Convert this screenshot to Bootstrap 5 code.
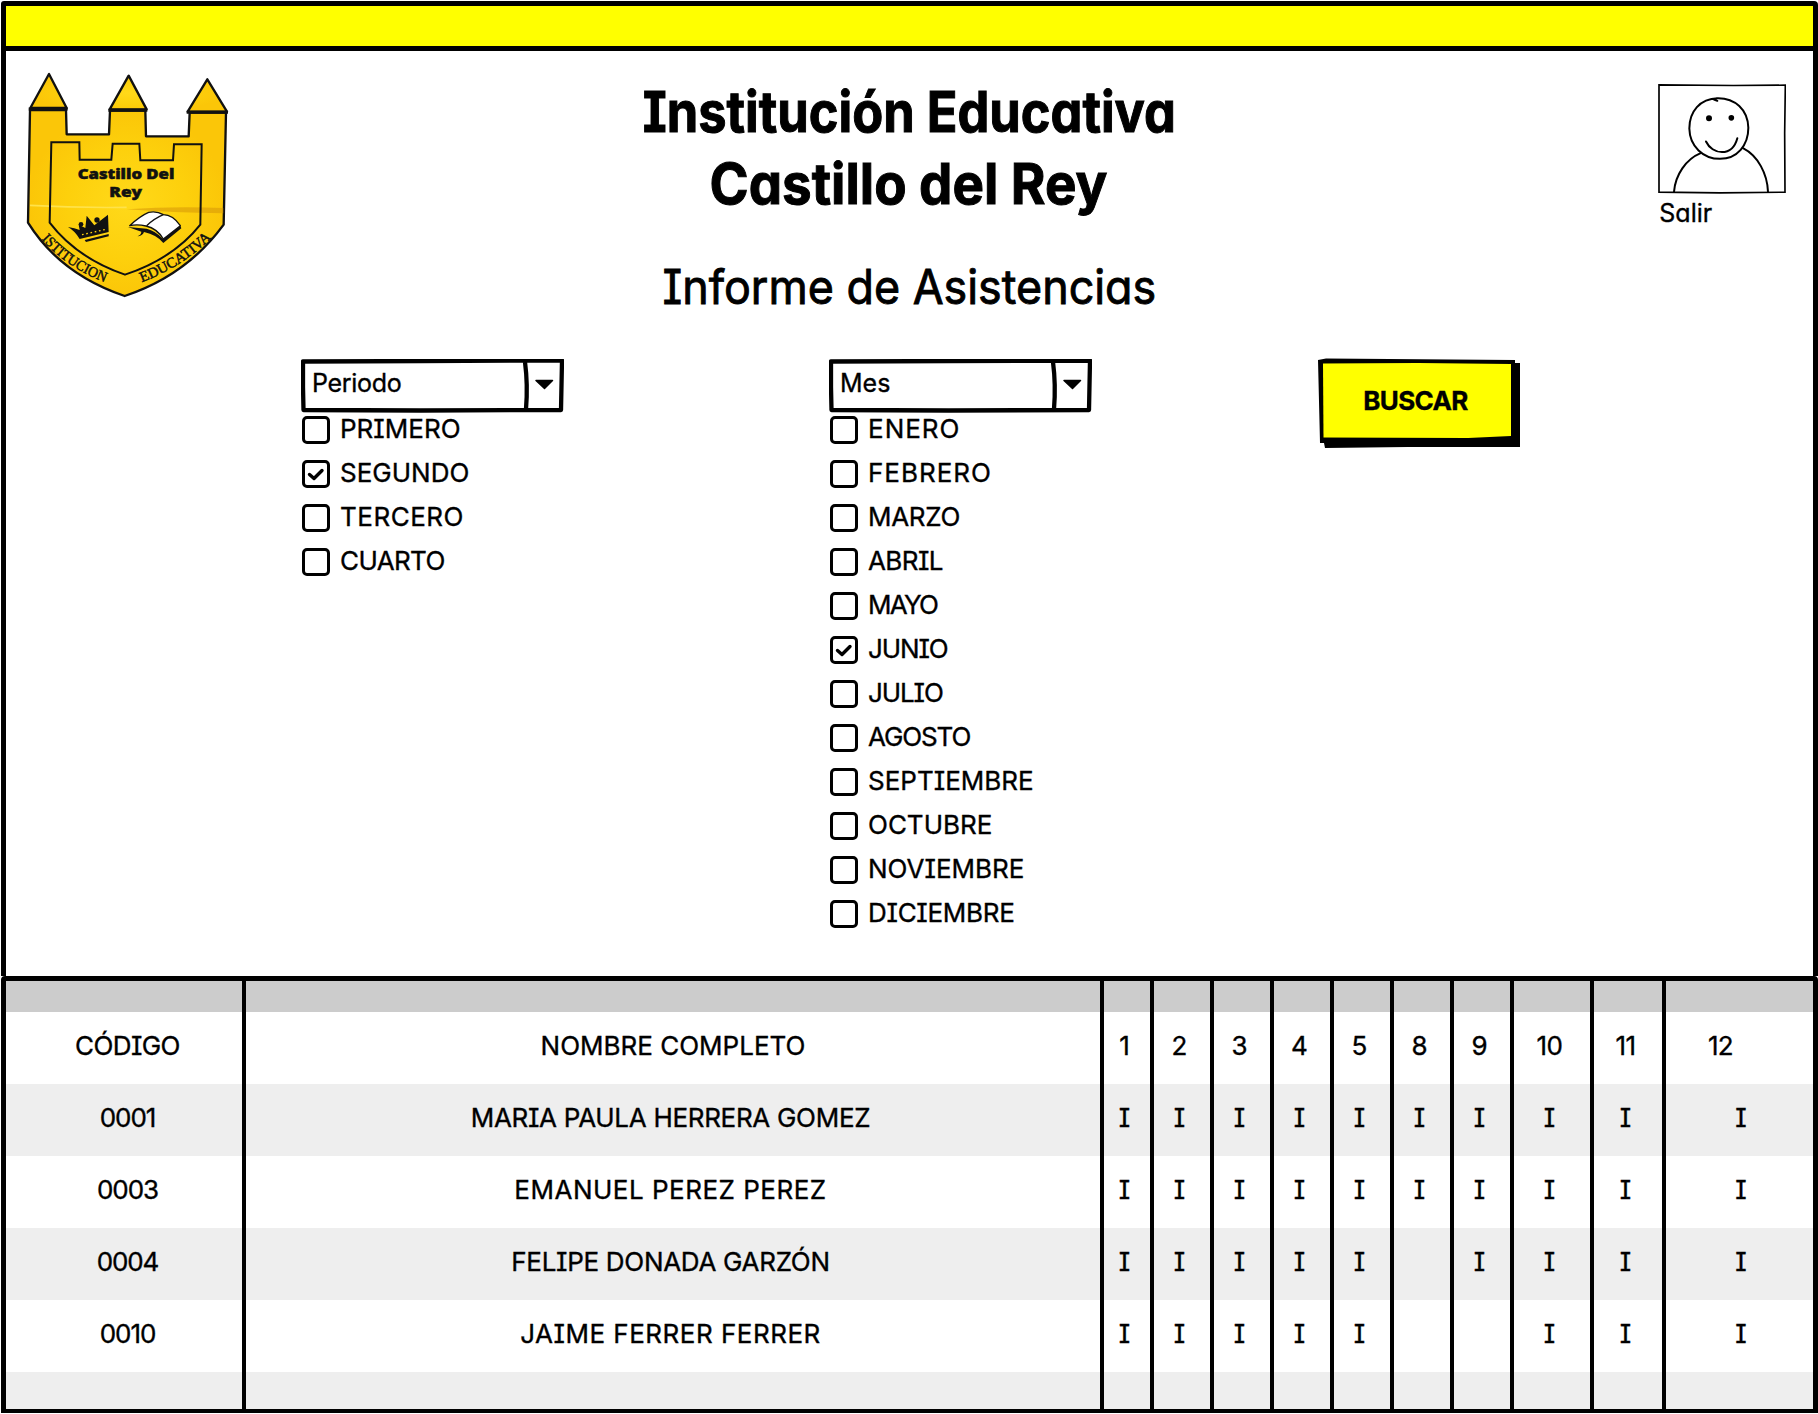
<!DOCTYPE html>
<html lang="es">
<head>
<meta charset="utf-8">
<meta name="viewport" content="width=device-width, initial-scale=1">
<title>Informe de Asistencias</title>
<link href="https://cdn.jsdelivr.net/npm/bootstrap@5.3.0/dist/css/bootstrap.min.css" rel="stylesheet">
<style>
body{font-family:Inter,"Open Sans",sans-serif;font-feature-settings:"cv08" 1,"cv11" 1;font-size:26px;line-height:28px;color:#000;background:#fff;-webkit-text-stroke:.35px #000}
.page-wrap{width:1818px;height:1414px;overflow:hidden;padding:1px 0 0 1px}
.top-strip{height:50px;background:#ff0;border:5px solid #000;border-radius:3px 4px 0 0}
.sheet{height:925px;border:solid #000;border-width:0 5px}
.site-head{height:308px}
.crest{width:213.33px;height:230px;margin:19px 0 0 14px}
.titles{width:1361px;margin-left:-5px;padding-top:25px}
.titles h1{font-size:56px;line-height:72px;font-weight:700;margin:0;-webkit-text-stroke:1px #000}
.titles h2{font-size:48px;line-height:58px;font-weight:400;margin:38px 0 0;-webkit-text-stroke:.9px #000}
.titles span{display:inline-block;white-space:nowrap}
.sq-a{transform:scaleX(.903)}
.sq-b{transform:scaleX(.945)}
.sq-c{transform:scaleX(.934)}
.profile{margin:32px 0 0 69px;width:130px}
.profile a{font-size:25px;color:#000;margin:5px 0 0 0;padding-left:1px}
.filters{padding-left:295px}
.pick{width:263px}
.pick-2{margin-left:265px}
.combo{width:263px;height:53px;font-size:25px;line-height:28px;background:none;border:0;padding:0 0 5px 11px;text-align:left;color:#000}
.combo svg,.go svg{position:absolute;inset:0;z-index:-1}
.combo,.go{position:relative;z-index:0}
.opt{height:28px;margin-bottom:16px;padding-left:1px}
.opt .form-check-input{width:28px;height:28px;margin:0 10px 0 0;border:3px solid #000;border-radius:5px;background-color:#fff;flex:none}
.opt .form-check-input:checked{background-color:#fff;background-size:22px;background-position:center;background-image:url("data:image/svg+xml,%3Csvg xmlns='http://www.w3.org/2000/svg' viewBox='0 0 22 22'%3E%3Cpath d='M4.500 11.500L9 15.500L17 7.500' fill='none' stroke='%23000' stroke-width='3.400' stroke-linecap='round' stroke-linejoin='round'/%3E%3C/svg%3E")}
.opt label{padding-bottom:2px}
.go{width:203px;height:90px;margin:-1px 0 0 226px;border:0;background:none;padding:0 8px 4px 0;font-size:26px;font-weight:700;color:#000;letter-spacing:-.6px}
.k1{letter-spacing:-.6px}.k2{letter-spacing:-1.1px}.k3{letter-spacing:.5px}.k4{letter-spacing:1px}.k5{letter-spacing:-.3px}.k6{letter-spacing:-1.8px}
.report{width:1817px;height:437px;border:5px solid #000;border-bottom-width:4px;border-radius:4px 4px 0 0}
.report table{width:1807px;table-layout:fixed;border-collapse:separate;border-spacing:0;margin:0;color:#000}
.report td,.report th{height:72px;padding:0 0 5px;text-align:center;vertical-align:middle;font-weight:400;border-right:4px solid #000;white-space:nowrap}
.report td:first-child,.report th:first-child{padding-left:7px}
.report td:nth-child(2){padding-right:5px}
.report td:nth-child(n+3),.report th:nth-child(n+3){padding-right:5px}
.report tr>:last-child{border-right:0}
.report tr.cap td{height:31px;padding:0;background:#ccc}
.report tr.tail td{height:37px;padding:0}
.report tr.alt td{background:#eee}
.report td.d0{padding:0 0 5px 3px}
.report th.d12{padding-right:38px}
</style>
</head>
<body>
<div class="page-wrap">
  <div class="top-strip"></div>
  <main class="sheet">
    <header class="site-head d-flex align-items-start">
      <svg class="crest flex-shrink-0" viewBox="60 60 640 690" aria-label="Escudo">
        <defs><radialGradient id="gold"><stop offset="0" stop-color="#ffd91a"/><stop offset=".6" stop-color="#fdd00c"/><stop offset="1" stop-color="#fbc608"/></radialGradient></defs>
        <g stroke="#111" stroke-width="7" stroke-linejoin="round" fill="url(#gold)">
          <path d="M90 180H198L200 253H327L330 182H436L438 259H566L569 188H678L671 524Q560 676 374 738Q180 672 84 518L90 180Z"/>
          <path d="M147 72L91 174H200ZM386 77L329 178H440ZM622 88L563 185H681Z"/>
        </g>
        <path d="M86 177H203M325 181H442M560 187H684" stroke="#111" stroke-width="9"/>
        <path d="M380 478Q520 468 670 474V490Q520 488 380 478Z" fill="#d99b08" opacity=".6"/>
        <path d="M90 466Q230 474 380 472" fill="none" stroke="#ffe24a" stroke-width="5"/>
        <path d="M154 277H238L239 329H334L338 281H418L421 331H519L522 283H605L601 524Q520 626 375 674Q230 624 149 518Z" fill="none" stroke="#111" stroke-width="6"/>
        <g font-family="'Open Sans',Inter,sans-serif" font-weight="800" font-size="42" text-anchor="middle" fill="#111" stroke="#111" stroke-width="1.500">
          <text x="378" y="388" textLength="290" lengthAdjust="spacingAndGlyphs">Castillo Del</text>
          <text x="377" y="440" textLength="98" lengthAdjust="spacingAndGlyphs">Rey</text>
        </g>
        <g fill="#111">
          <path d="M204 531Q224 534 239 540L236 524L256 534L260 497L283 526L324 494L326 546L239 567Q225 543 204 531Z"/>
          <circle cx="243" cy="523" r="7"/><circle cx="291" cy="510" r="8"/>
          <path d="M254 570L326 552V559L258 576Z"/>
          <path d="M246 554L318 538" stroke="#fdd00c" stroke-width="4" stroke-dasharray="5 8"/>
          <path d="M384 531L440 536Q466 542 488 566L541 527L544 535L490 579Q470 554 432 546Q428 558 412 559Q424 554 424 545Z"/>
        </g>
        <path d="M389 527Q420 498 446 487Q470 482 490 494Q518 494 541 527L490 567Q472 536 438 528Q412 522 389 527Z" fill="#fff" stroke="#111" stroke-width="4" stroke-linejoin="round"/>
        <path d="M490 494Q462 506 440 527" fill="none" stroke="#111" stroke-width="4"/>
        <path id="arcL" d="M124 568Q204 656 318 698" fill="none"/>
        <path id="arcR" d="M425 697Q548 650 638 560" fill="none"/>
        <g font-family="'Liberation Serif',serif" font-size="44" fill="#111" stroke="#111" stroke-width="1.400">
          <text><textPath href="#arcL" textLength="232" lengthAdjust="spacingAndGlyphs">ISTITUCION</textPath></text>
          <text><textPath href="#arcR" textLength="250" lengthAdjust="spacingAndGlyphs">EDUCATIVA</textPath></text>
        </g>
      </svg>
      <div class="titles text-center flex-shrink-0">
        <h1><span class="sq-a">Institución Educativa</span><br><span class="sq-b">Castillo del Rey</span></h1>
        <h2><span class="sq-c">Informe de Asistencias</span></h2>
      </div>
      <div class="profile d-flex flex-column align-items-start flex-shrink-0">
        <svg width="128" height="111" viewBox="174 250 384 332" fill="none" stroke="#000" stroke-width="6" stroke-linecap="round" aria-label="Usuario">
          <path d="M177 255L400 257L556 256L554 400L555 577L360 579L177 577Z" stroke-width="5"/>
          <path d="M353 295C300 296 268 335 268 386C269 440 310 477 360 477C412 477 445 436 445 384C444 330 405 293 350 295M342 299L352 303"/>
          <path d="M302 460C258 478 226 525 222 576M429 445C474 468 502 522 504 576M318 425C336 464 396 474 412 415"/>
          <circle cx="327" cy="355" r="6" fill="#000"/><circle cx="394" cy="354" r="5.500" fill="#000"/>
        </svg>
        <a href="#" class="text-decoration-none">Salir</a>
      </div>
    </header>

    <section class="filters d-flex align-items-start">
      <div class="pick">
        <button type="button" class="combo d-block k5">Periodo
          <svg width="263" height="54" fill="none" stroke="#000" stroke-width="4.300" stroke-linejoin="round"><path d="M2 2.500L120 2L261 1.500L260 51L120 51.500L2.500 51L2 28Z"/><path d="M224 3Q227 26 225 50"/><path d="M235 21.500H251.500L243.500 29.500Z" fill="#000" stroke-width="1.500"/></svg>
        </button>
        <div class="pt-1">
          <div class="opt d-flex align-items-center"><input class="form-check-input" type="checkbox" id="p1"><label for="p1">PRIMERO</label></div>
          <div class="opt d-flex align-items-center"><input class="form-check-input" type="checkbox" id="p2" checked><label for="p2">SEGUNDO</label></div>
          <div class="opt d-flex align-items-center"><input class="form-check-input" type="checkbox" id="p3"><label for="p3" class="k3">TERCERO</label></div>
          <div class="opt d-flex align-items-center"><input class="form-check-input" type="checkbox" id="p4"><label for="p4" class="k1">CUARTO</label></div>
        </div>
      </div>
      <div class="pick pick-2">
        <button type="button" class="combo d-block">Mes
          <svg width="263" height="54" fill="none" stroke="#000" stroke-width="4.300" stroke-linejoin="round"><path d="M2 2.500L120 2L261 1.500L260 51L120 51.500L2.500 51L2 28Z"/><path d="M224 3Q227 26 225 50"/><path d="M235 21.500H251.500L243.500 29.500Z" fill="#000" stroke-width="1.500"/></svg>
        </button>
        <div class="pt-1">
          <div class="opt d-flex align-items-center"><input class="form-check-input" type="checkbox" id="m1"><label for="m1" class="k4">ENERO</label></div>
          <div class="opt d-flex align-items-center"><input class="form-check-input" type="checkbox" id="m2"><label for="m2" class="k4">FEBRERO</label></div>
          <div class="opt d-flex align-items-center"><input class="form-check-input" type="checkbox" id="m3"><label for="m3" class="k5">MARZO</label></div>
          <div class="opt d-flex align-items-center"><input class="form-check-input" type="checkbox" id="m4"><label for="m4" class="k1">ABRIL</label></div>
          <div class="opt d-flex align-items-center"><input class="form-check-input" type="checkbox" id="m5"><label for="m5" class="k6">MAYO</label></div>
          <div class="opt d-flex align-items-center"><input class="form-check-input" type="checkbox" id="m6" checked><label for="m6" class="k2">JUNIO</label></div>
          <div class="opt d-flex align-items-center"><input class="form-check-input" type="checkbox" id="m7"><label for="m7" class="k2">JULIO</label></div>
          <div class="opt d-flex align-items-center"><input class="form-check-input" type="checkbox" id="m8"><label for="m8" class="k2">AGOSTO</label></div>
          <div class="opt d-flex align-items-center"><input class="form-check-input" type="checkbox" id="m9"><label for="m9">SEPTIEMBRE</label></div>
          <div class="opt d-flex align-items-center"><input class="form-check-input" type="checkbox" id="m10"><label for="m10">OCTUBRE</label></div>
          <div class="opt d-flex align-items-center"><input class="form-check-input" type="checkbox" id="m11"><label for="m11">NOVIEMBRE</label></div>
          <div class="opt d-flex align-items-center"><input class="form-check-input" type="checkbox" id="m12"><label for="m12" class="k5">DICIEMBRE</label></div>
        </div>
      </div>
      <button type="button" class="go">BUSCAR
        <svg width="203" height="90"><path d="M0 2L8 .5L197 2V5H202V89H90L7 90L6 85H2Z"/><path d="M5 5.500L100 5L193 6V78L150 80L5.500 79.500Z" fill="#ff0"/></svg>
      </button>
    </section>
  </main>

  <div class="report">
    <table>
      <colgroup><col style="width:240px"><col style="width:858px"><col style="width:50px"><col style="width:60px"><col style="width:60px"><col style="width:60px"><col style="width:60px"><col style="width:60px"><col style="width:60px"><col style="width:80px"><col style="width:72px"><col style="width:147px"></colgroup>
      <tbody>
        <tr class="cap"><td></td><td></td><td></td><td></td><td></td><td></td><td></td><td></td><td></td><td></td><td></td><td></td></tr>
        <tr><th class="k1">CÓDIGO</th><th>NOMBRE COMPLETO</th><th>1</th><th>2</th><th>3</th><th>4</th><th>5</th><th>8</th><th>9</th><th class="k1">10</th><th class="k1">11</th><th class="k1 d12">12</th></tr>
        <tr class="alt"><td class="k2">0001</td><td class="k5">MARIA PAULA HERRERA GOMEZ</td><td>I</td><td>I</td><td>I</td><td>I</td><td>I</td><td>I</td><td>I</td><td>I</td><td>I</td><td class="d0">I</td></tr>
        <tr><td class="k2">0003</td><td class="k3">EMANUEL PEREZ PEREZ</td><td>I</td><td>I</td><td>I</td><td>I</td><td>I</td><td>I</td><td>I</td><td>I</td><td>I</td><td class="d0">I</td></tr>
        <tr class="alt"><td class="k2">0004</td><td class="k5">FELIPE DONADA GARZÓN</td><td>I</td><td>I</td><td>I</td><td>I</td><td>I</td><td></td><td>I</td><td>I</td><td>I</td><td class="d0">I</td></tr>
        <tr><td class="k2">0010</td><td class="k3">JAIME FERRER FERRER</td><td>I</td><td>I</td><td>I</td><td>I</td><td>I</td><td></td><td></td><td>I</td><td>I</td><td class="d0">I</td></tr>
        <tr class="alt tail"><td></td><td></td><td></td><td></td><td></td><td></td><td></td><td></td><td></td><td></td><td></td><td></td></tr>
      </tbody>
    </table>
  </div>
</div>
<script src="https://cdn.jsdelivr.net/npm/bootstrap@5.3.0/dist/js/bootstrap.bundle.min.js"></script>
</body>
</html>
